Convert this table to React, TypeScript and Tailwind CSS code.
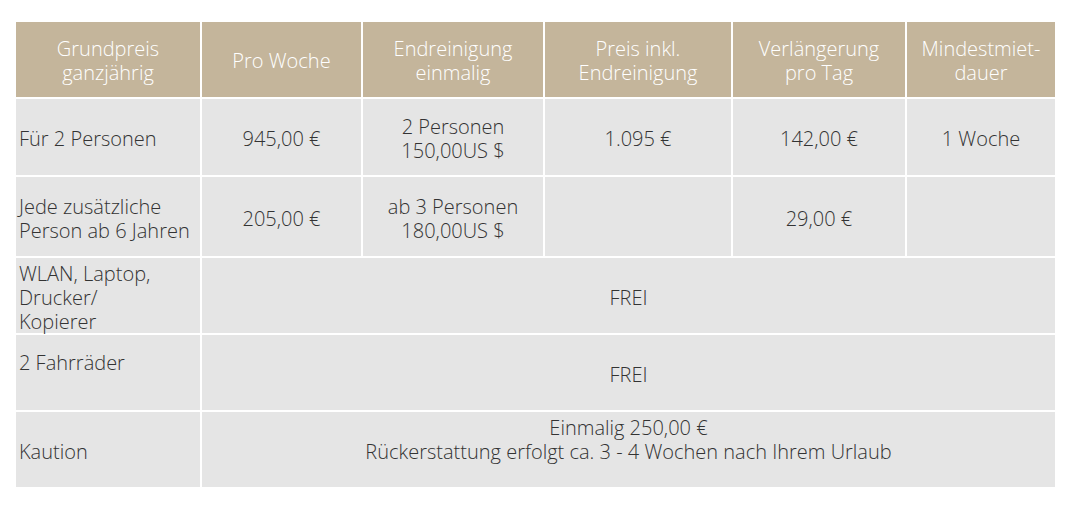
const head = [
  ['Grundpreis', 'ganzjährig'],
  ['Pro Woche'],
  ['Endreinigung', 'einmalig'],
  ['Preis inkl.', 'Endreinigung'],
  ['Verlängerung', 'pro Tag'],
  ['Mindestmiet-', 'dauer'],
]

function Lines({ lines }: { lines: string[] }) {
  return (
    <>
      {lines.map((l, i) => (
        <div key={i}>{l === '' ? '\u00a0' : l}</div>
      ))}
    </>
  )
}

const cell = 'bg-[#e5e5e5] flex flex-col justify-center pt-[4px]'
const mid = `${cell} items-center text-center`
const left = `${cell} pl-[3px]`

export default function App() {
  return (
    <div
      className="w-[1076px] h-[508px] bg-white pt-[22px] pl-[16px] text-[20px] leading-[24px] font-light text-[#333333]"
      style={{ fontFamily: '"Open Sans", Lato, sans-serif' }}
    >
      <div className="grid grid-cols-[184px_159px_180px_186px_172px_148px] grid-rows-[75px_76px_79px_75px_75px_75px] gap-[2px] w-[1039px]">
        {/* ── Kopfzeile ─────────────────────────── */}
        {head.map((h, i) => (
          <div key={i} className="bg-[#c4b59b] text-white flex flex-col items-center justify-center text-center pt-[2px]">
            <Lines lines={h} />
          </div>
        ))}

        {/* ── Für 2 Personen ───────────────────── */}
        <div className={left}>Für 2 Personen</div>
        <div className={mid}>945,00 €</div>
        <div className={mid}>
          <Lines lines={['2 Personen', '150,00US $']} />
        </div>
        <div className={mid}>1.095 €</div>
        <div className={mid}>142,00 €</div>
        <div className={mid}>1 Woche</div>

        {/* ── Jede zusätzliche Person ──────────── */}
        <div className={left}>
          <Lines lines={['Jede zusätzliche', 'Person ab 6 Jahren']} />
        </div>
        <div className={mid}>205,00 €</div>
        <div className={mid}>
          <Lines lines={['ab 3 Personen', '180,00US $']} />
        </div>
        <div className={mid}></div>
        <div className={mid}>29,00 €</div>
        <div className={mid}></div>

        {/* ── Extras ───────────────────────────── */}
        <div className={left}>
          <Lines lines={['WLAN, Laptop,', 'Drucker/', 'Kopierer']} />
        </div>
        <div className={`${mid} col-span-5`}>FREI</div>

        <div className={left}>
          <Lines lines={['2 Fahrräder', '']} />
        </div>
        <div className={`${mid} col-span-5`}>FREI</div>

        <div className={left}>Kaution</div>
        <div className={`${mid} col-span-5`}>
          <Lines lines={['Einmalig 250,00 €', 'Rückerstattung erfolgt ca. 3 - 4 Wochen nach Ihrem Urlaub', '']} />
        </div>
      </div>
    </div>
  )
}
